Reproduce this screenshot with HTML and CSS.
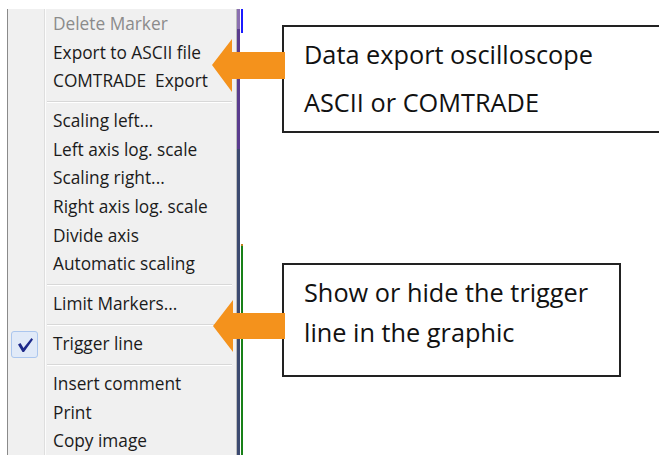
FILE: index.html
```html
<!DOCTYPE html>
<html>
<head>
    <title>Oscilloscope context menu</title>
    <link rel="stylesheet" href="styles.css">
</head>
<body>
<div class="shot">
    <div class="menu">
        <div class="item disabled">Delete Marker</div>
        <div class="item">Export to ASCII file</div>
        <div class="item">COMTRADE&nbsp; Export</div>
        <div class="sep"></div>
        <div class="item">Scaling left...</div>
        <div class="item">Left axis log. scale</div>
        <div class="item">Scaling right...</div>
        <div class="item">Right axis log. scale</div>
        <div class="item">Divide axis</div>
        <div class="item">Automatic scaling</div>
        <div class="sep"></div>
        <div class="item">Limit Markers...</div>
        <div class="sep"></div>
        <div class="item checked">
            <span class="check">
                <svg width="25" height="25" viewBox="0 0 25 25">
                    <path d="M6 12.5 L8.5 11 L11.5 16 L19.5 6 L21 7.5 L12 20 L10.5 20 Z" fill="#1e2a8a"/>
                </svg>
            </span>
            Trigger line
        </div>
        <div class="sep"></div>
        <div class="item">Insert comment</div>
        <div class="item">Print</div>
        <div class="item">Copy image</div>
    </div>
    <div class="plot-edge"></div>
    <div class="trace"></div>
    <div class="notes">
        <div class="callout callout-export">
            Data export oscilloscope<br>
            ASCII or COMTRADE
        </div>
        <div class="callout callout-trigger">
            Show or hide the trigger<br>
            line in the graphic
        </div>
    </div>
    <svg class="arrows" width="659" height="455" viewBox="0 0 659 455">
        <polygon points="212,65 232,39 232,52 285,52 285,79 232,79 232,92" fill="#f4921c"/>
        <polygon points="213,326 233,300 233,313 285,313 285,339 233,339 233,352" fill="#f4921c"/>
    </svg>
</div>
</body>
</html>
```

FILE: styles.css
```css
body {
    margin: 0;
    background-color: white;
}

.shot {
    position: relative;
    display: flex;
    width: 659px;
    height: 455px;
    overflow: hidden;
}

/* context menu */
.menu {
    flex: none;
    margin-top: 9px;
    margin-left: 7px;
    padding-top: 1px;
    width: 228px;
    border-left: 1px solid #8a8a8a;
    border-right: 1px solid #bcbcbc;
    background: linear-gradient(to right, transparent 36px, #dedede 36px 37px, #fcfcfc 37px 38px, transparent 38px), #f0f0f0;
    font-family: "Open Sans", sans-serif;
    font-size: 17.3px;
    color: #1b1b1b;
}

.item {
    position: relative;
    height: 28.6px;
    line-height: 28.6px;
    padding-left: 45px;
    white-space: nowrap;
}

.item.disabled {
    color: #8b8b8b;
}

.sep {
    height: 11.4px;
    margin-left: 39px;
    margin-right: 4px;
    background: linear-gradient(to bottom, transparent 5px, #d8d8d8 5px 6px, #ffffff 6px 7px, transparent 7px);
}

.check {
    position: absolute;
    left: 3px;
    top: 1px;
    width: 25px;
    height: 25px;
    border: 1px solid #abc6ee;
    border-radius: 3px;
    background-color: #e1eaf8;
}

.check svg {
    display: block;
}

/* edge of the plot area */
.plot-edge {
    flex: none;
    margin-top: 9px;
    width: 3px;
    background: linear-gradient(to bottom, #8a6fb0 0 20px, #5a3c8e 20px 140px, #3c4a70 140px);
}

.trace {
    flex: none;
    margin-top: 9px;
    margin-left: 1px;
    width: 2px;
    background: linear-gradient(to bottom, #1b1bff 0 24px, transparent 24px 235px, #c08020 235px 237px, #188018 237px);
}

/* annotations */
.notes {
    flex: 1;
    min-width: 0;
    padding-left: 39px;
    padding-top: 25px;
    font-family: "Open Sans", sans-serif;
    font-size: 25.3px;
    color: #111;
}

.callout {
    border: 2px solid #222;
    background-color: white;
    padding-left: 20px;
    white-space: nowrap;
}

.callout-export {
    width: 400px;
    line-height: 48px;
    padding-top: 3px;
    padding-bottom: 5px;
}

.callout-trigger {
    width: 315px;
    margin-top: 130px;
    line-height: 40px;
    padding-top: 7px;
    padding-bottom: 23px;
}

.arrows {
    position: absolute;
    left: 0;
    top: 0;
    pointer-events: none;
}
```
